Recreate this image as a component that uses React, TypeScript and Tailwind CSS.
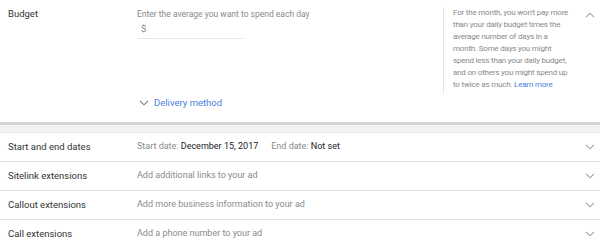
import React from "react";

const Chevron = ({ up = false, className = "" }: { up?: boolean; className?: string }) => (
  <svg width="10" height="6" viewBox="0 0 10 6" className={className}>
    <path
      d={up ? "M1 5.2 L5 1.2 L9 5.2" : "M1 0.8 L5 4.8 L9 0.8"}
      fill="none"
      stroke="currentColor"
      strokeWidth="1.1"
    />
  </svg>
);

const Row = ({ label, children }: { label: string; children: React.ReactNode }) => (
  <div className="flex h-[29px] items-center border-b border-[#e3e3e3] bg-white">
    <div className="w-[137px] pl-[8px] text-[9.5px] text-[#333]">{label}</div>
    <div className="flex-1 text-[9px] text-[#8a8a8a]">{children}</div>
    <div className="w-[15px] text-[#a0a0a0]">
      <Chevron />
    </div>
  </div>
);

const helpLines = [
  "For the month, you won't pay more",
  "than your daily budget times the",
  "average number of days in a",
  "month. Some days you might",
  "spend less than your daily budget,",
  "and on others you might spend up",
];

export default function App() {
  return (
    <div
      className="w-[600px] h-[245px] overflow-hidden bg-white"
      style={{ fontFamily: "Roboto, 'Liberation Sans', sans-serif" }}
    >
      <div className="flex h-[122px] bg-white">
        <div className="w-[137px] pl-[8px] pt-[8px] text-[9.5px] text-[#333] leading-[12px]">Budget</div>
        <div className="w-[306px] pt-[8px]">
          <div className="text-[8.5px] leading-[12px] text-[#8a8a8a]">Enter the average you want to spend each day</div>
          <div className="mt-[3px] w-[106px] border-b border-[#e6e6e6] pb-[3px] pl-[4px] text-[9.5px] leading-[12px] text-[#8a8a8a]">
            $
          </div>
          <div className="mt-[58px] flex items-center gap-[5px] pl-[2px]">
            <Chevron className="text-[#777]" />
            <span className="text-[9.5px] leading-[12px] text-[#4a7fe0]">Delivery method</span>
          </div>
        </div>
        <div className="mt-[7px] h-[86px] w-[134px] border-l border-[#e3e3e3] pl-[9px] text-[8px] leading-[12px] tracking-[-0.2px] text-[#8a8a8a] whitespace-nowrap">
          {helpLines.map((l) => (
            <div key={l}>{l}</div>
          ))}
          <div>
            to twice as much. <span className="text-[#4a7fe0]">Learn more</span>
          </div>
        </div>
        <div className="flex flex-1 justify-end pr-[5px] pt-[12px] text-[#a0a0a0]">
          <Chevron up />
        </div>
      </div>
      <div className="h-[3px] bg-[#d6d6d6]" />
      <div className="h-[8px] border-b border-[#e6e6e6] bg-[#f2f2f2]" />
      <Row label="Start and end dates">
        Start date: <span className="text-[#222]">December 15, 2017</span>
        <span className="ml-[13px]">End date: </span>
        <span className="text-[#222]">Not set</span>
      </Row>
      <Row label="Sitelink extensions">Add additional links to your ad</Row>
      <Row label="Callout extensions">Add more business information to your ad</Row>
      <Row label="Call extensions">Add a phone number to your ad</Row>
    </div>
  );
}
